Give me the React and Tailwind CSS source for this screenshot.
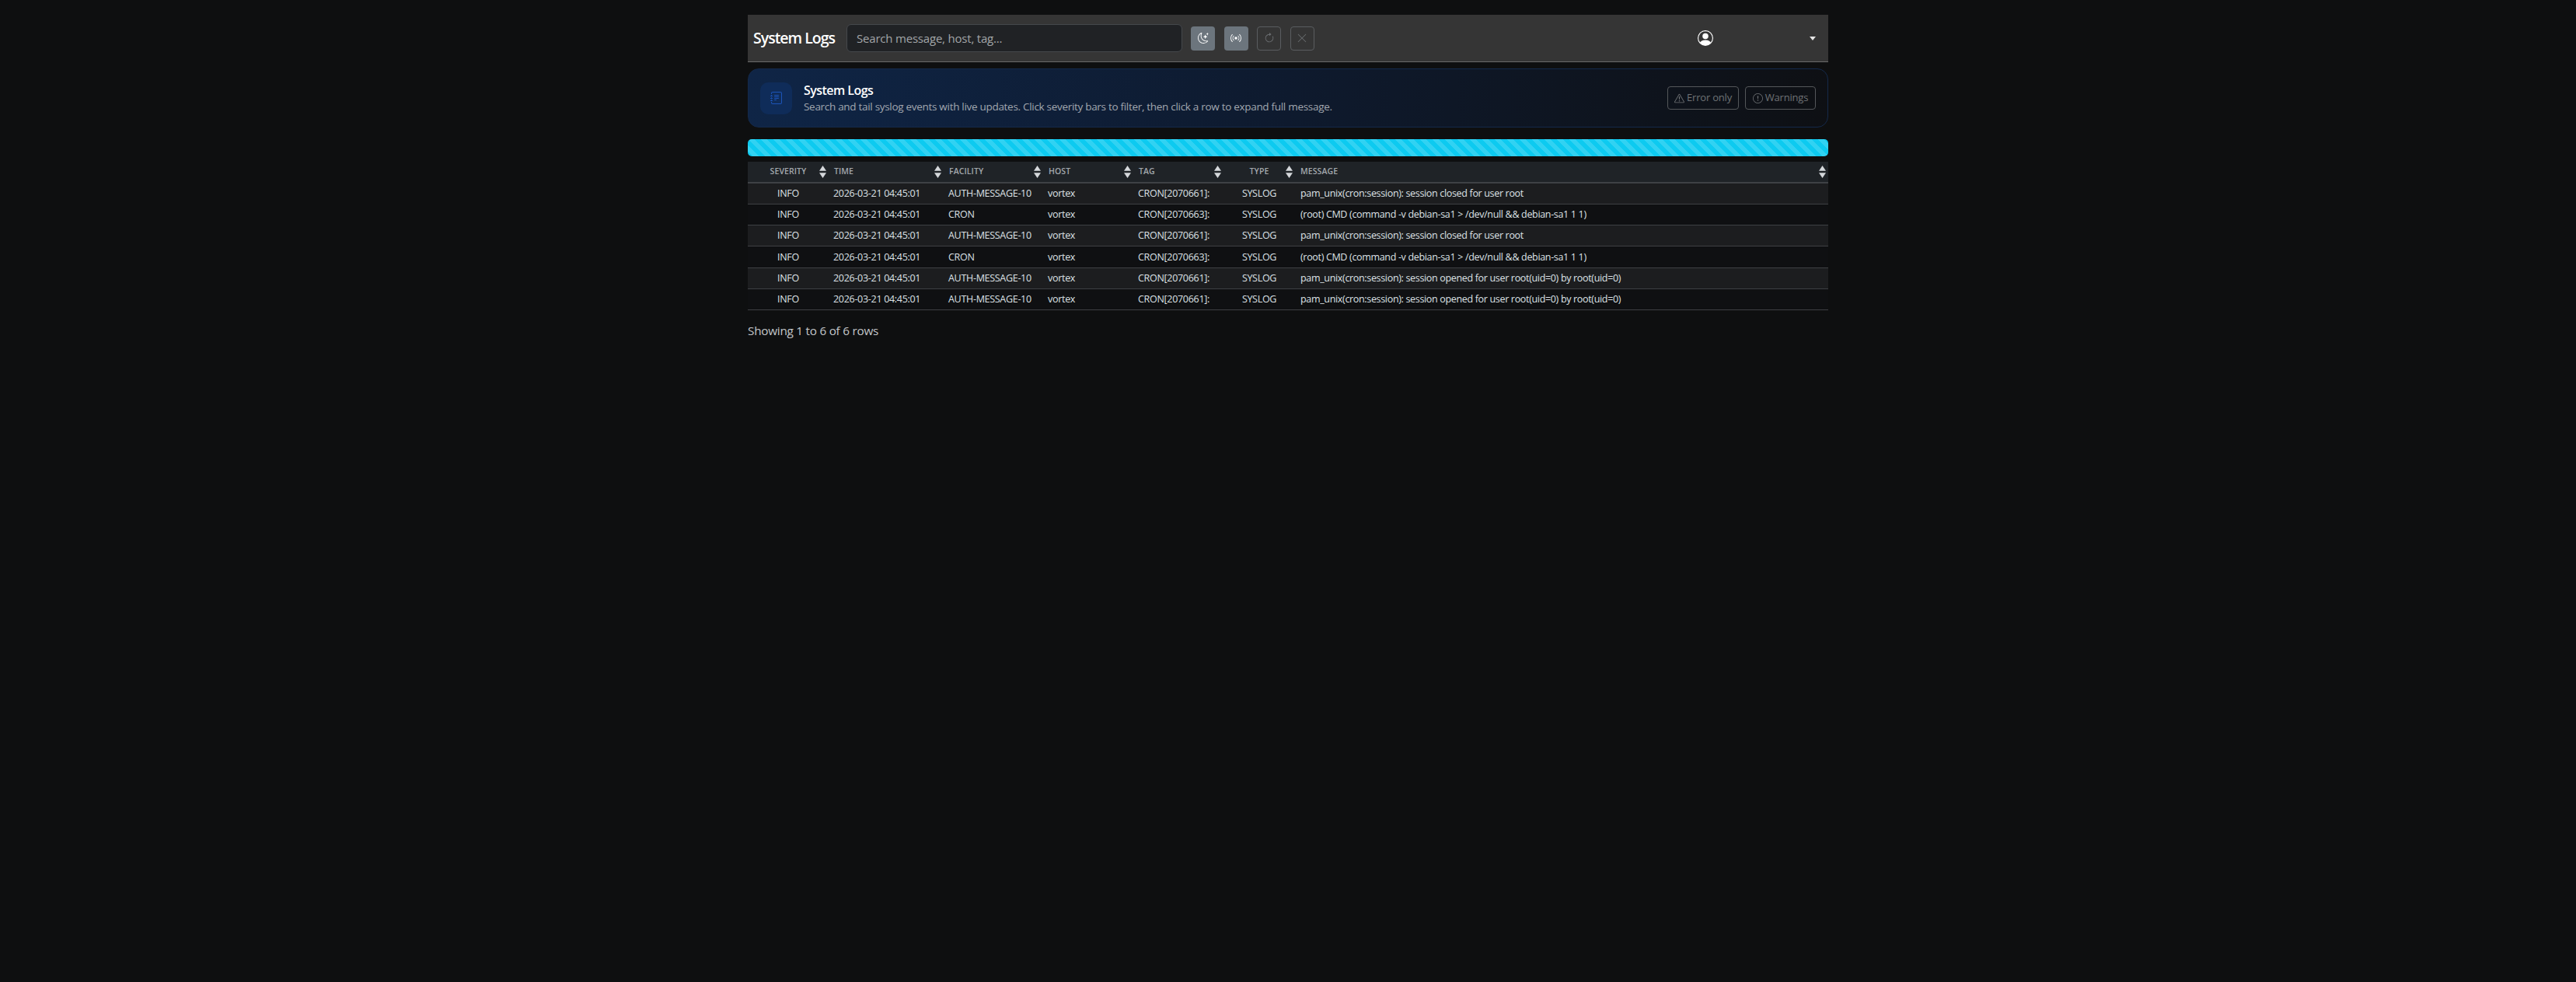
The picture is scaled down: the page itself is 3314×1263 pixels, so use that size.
import { BsMoonStars, BsBroadcast, BsArrowClockwise, BsXLg, BsJournalText, BsExclamationTriangle, BsExclamationCircle, BsPersonCircle } from 'react-icons/bs';

const columns = [
  { label: 'Severity', width: 'w-[104px]', center: true },
  { label: 'Time', width: 'w-[148px]' },
  { label: 'Facility', width: 'w-[128px]' },
  { label: 'Host', width: 'w-[116px]' },
  { label: 'Tag', width: 'w-[116px]' },
  { label: 'Type', width: 'w-[92px]', center: true },
  { label: 'Message', width: 'w-[686px]' },
];

const closed = 'pam_unix(cron:session): session closed for user root';
const opened = 'pam_unix(cron:session): session opened for user root(uid=0) by root(uid=0)';
const cmd = '(root) CMD (command -v debian-sa1 > /dev/null && debian-sa1 1 1)';

const rows = [
  ['AUTH-MESSAGE-10', 'CRON[2070661]:', closed],
  ['CRON', 'CRON[2070663]:', cmd],
  ['AUTH-MESSAGE-10', 'CRON[2070661]:', closed],
  ['CRON', 'CRON[2070663]:', cmd],
  ['AUTH-MESSAGE-10', 'CRON[2070661]:', opened],
  ['AUTH-MESSAGE-10', 'CRON[2070661]:', opened],
];

function SortArrows() {
  return (
    <svg viewBox="0 0 10 18" className="absolute right-[3px] top-1/2 h-[17px] w-[9px] -translate-y-1/2 text-[#d5d8db]" fill="currentColor">
      <path d="M5 0 10 7.5H0Z" />
      <path d="M5 18 0 10.5H10Z" />
    </svg>
  );
}

function IconButton({ children, active }) {
  return (
    <button
      type="button"
      className={
        active
          ? 'flex h-[31px] w-[31px] items-center justify-center rounded-[4px] bg-[#6c757d] text-[14px] text-white'
          : 'flex h-[31px] w-[31px] items-center justify-center rounded-[4px] border border-[#5a5d60] text-[14px] text-[#6c6f72]'
      }
    >
      {children}
    </button>
  );
}

export default function App() {
  return (
    <div className="min-h-screen bg-[#0e0f10] pt-[19px] font-['Open_Sans',sans-serif] text-[#dee2e6]">
      <div className="mx-auto w-[1390px]">
        <nav className="flex h-[61px] items-center border-b border-[#6a6a6a] bg-[#353535] pl-[7px]">
          <span className="w-[120px] shrink-0 text-[19.5px] font-semibold tracking-[-1px] text-white">System Logs</span>
          <input
            className="h-[36px] w-[432px] rounded-[6px] border border-[#45484c] bg-[#202225] px-[12px] text-[15px] tracking-[-0.2px] text-white placeholder:text-[#a2a5a8]"
            placeholder="Search message, host, tag..."
          />
          <div className="ml-[11px] flex gap-[11.5px]">
            <IconButton active><BsMoonStars /></IconButton>
            <IconButton active><BsBroadcast /></IconButton>
            <IconButton><BsArrowClockwise /></IconButton>
            <IconButton><BsXLg /></IconButton>
          </div>
          <div className="ml-auto mr-[16px] flex items-center">
            <BsPersonCircle className="text-[20px] text-white" />
            <svg viewBox="0 0 8 5" className="ml-[124px] h-[5px] w-[8px] text-[#e6e6e6]" fill="currentColor">
              <path d="M0 0H8L4 5Z" />
            </svg>
          </div>
        </nav>

        <section className="mt-[8px] flex h-[76px] items-center rounded-[14px] border border-[#14294a] bg-[linear-gradient(90deg,#0f2546_0%,#0e1a2e_50%,#0e1014_100%)] pl-[15px] pr-[15px]">
          <div className="flex h-[41px] w-[41px] shrink-0 items-center justify-center rounded-[10px] bg-[#0f2c59] text-[16px] text-[#1c54b8]">
            <BsJournalText />
          </div>
          <div className="ml-[15px]">
            <h1 className="text-[16px] font-semibold leading-[20px] tracking-[-0.55px] text-white">System Logs</h1>
            <p className="mt-[1px] text-[13.5px] leading-[20px] tracking-[-0.3px] text-[#a1a7af]">
              Search and tail syslog events with live updates. Click severity bars to filter, then click a row to expand full message.
            </p>
          </div>
          <div className="ml-auto flex gap-[8px]">
            <button type="button" className="flex h-[30px] w-[92px] items-center justify-center gap-[3px] rounded-[4px] border border-[#54575a] text-[13px] tracking-[-0.2px] text-[#6f7275]">
              <BsExclamationTriangle /> Error only
            </button>
            <button type="button" className="flex h-[30px] w-[91px] items-center justify-center gap-[3px] rounded-[4px] border border-[#54575a] text-[13px] tracking-[-0.2px] text-[#6f7275]">
              <BsExclamationCircle /> Warnings
            </button>
          </div>
        </section>

        <div className="mt-[15px] h-[22px] rounded-[5px] bg-[#0dcaf0] bg-[linear-gradient(45deg,rgba(255,255,255,.15)_25%,transparent_25%,transparent_50%,rgba(255,255,255,.15)_50%,rgba(255,255,255,.15)_75%,transparent_75%,transparent)] bg-[length:16px_16px]" />

        <table className="mt-[7px] w-full table-fixed border-collapse text-[12.5px]">
          <thead>
            <tr className="h-[27px] border-b-2 border-[#3e4145] bg-[#1f2327]">
              {columns.map(col => (
                <th key={col.label} className={`${col.width} relative px-[7px] py-0 text-[10.5px] font-semibold uppercase tracking-[0.1px] text-[#a3a8ad] ${col.center ? 'text-center' : 'text-left'}`}>
                  {col.label}
                  <SortArrows />
                </th>
              ))}
            </tr>
          </thead>
          <tbody>
            {rows.map((row, i) => (
              <tr key={i} className={`h-[27.3px] border-b border-[#3e4043] ${i % 2 === 0 ? 'bg-[#1c1d1f]' : 'bg-[#0f1012]'}`}>
                <td className="px-[6px] pb-0 pt-[1px] text-center tracking-[-0.3px]">INFO</td>
                <td className="px-[6px] pb-0 pt-[1px] tracking-[-0.3px]">2026-03-21 04:45:01</td>
                <td className="px-[6px] pb-0 pt-[1px] tracking-[-0.3px]">{row[0]}</td>
                <td className="px-[6px] pb-0 pt-[1px] tracking-[-0.3px]">vortex</td>
                <td className="px-[6px] pb-0 pt-[1px] tracking-[-0.3px]">{row[1]}</td>
                <td className="px-[6px] pb-0 pt-[1px] text-center tracking-[-0.3px]">SYSLOG</td>
                <td className="px-[7px] pb-0 pt-[1px] tracking-[-0.33px]">{row[2]}</td>
              </tr>
            ))}
          </tbody>
        </table>

        <p className="mt-[15px] text-[15.3px] tracking-[-0.25px] text-[#c3c6c9]">Showing 1 to 6 of 6 rows</p>
      </div>
    </div>
  );
}
